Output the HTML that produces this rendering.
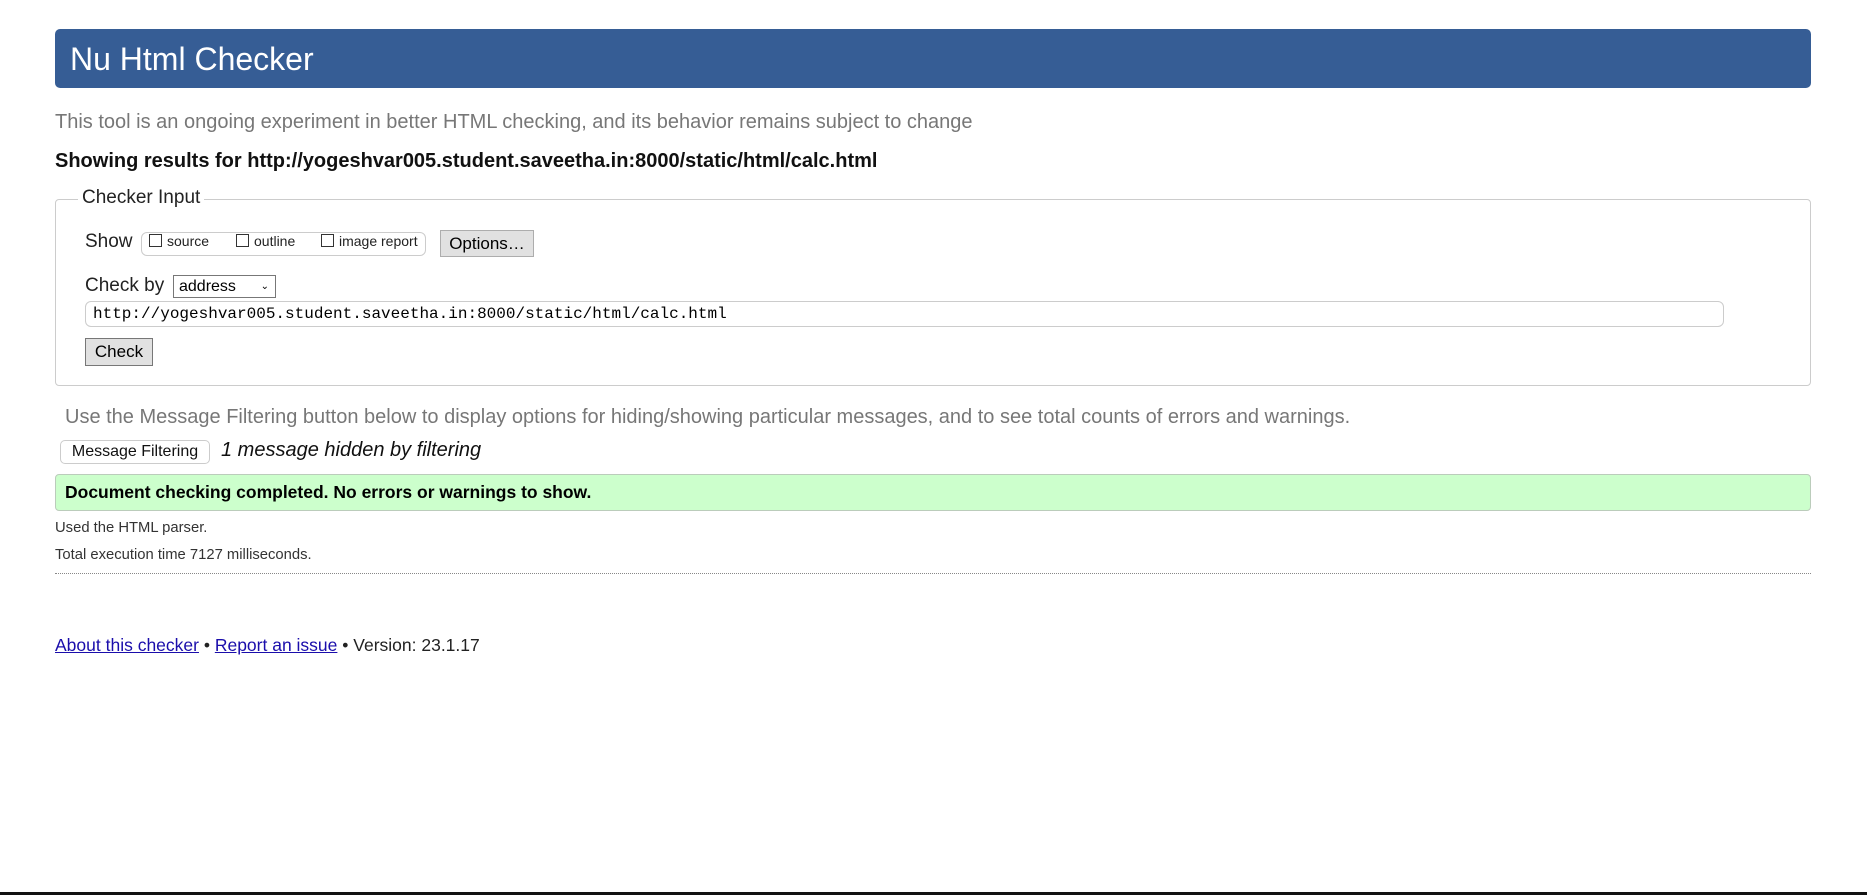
<!DOCTYPE html>
<html><head><meta charset="utf-8"><style>
body{margin:0;width:1867px;height:895px;background:#fff;font-family:"Liberation Sans",Arial,sans-serif;position:relative;overflow:hidden}
.a{position:absolute;white-space:nowrap}
.btn{position:absolute;background:#e1e1e1;border:1px solid #adadad;font-size:17px;color:#000;box-sizing:border-box;display:flex;align-items:center;justify-content:center}
.cb{display:inline-block;width:13px;height:13px;border:1px solid #333;box-sizing:border-box;vertical-align:-1px;margin-right:5px}
a{color:#1a0dab;text-decoration:underline}
</style></head><body>
<div class="a" style="left:55px;top:29px;width:1756px;height:59px;background:#365d95;border-radius:5px"></div>
<div class="a" style="left:70px;top:40px;font-size:32px;color:#fff;line-height:38px">Nu Html Checker</div>
<div class="a" style="left:55px;top:111px;font-size:20px;color:#777">This tool is an ongoing experiment in better HTML checking, and its behavior remains subject to change</div>
<div class="a" style="left:55px;top:150px;font-size:20px;font-weight:bold;color:#111">Showing results for http://yogeshvar005.student.saveetha.in:8000/static/html/calc.html</div>
<div class="a" style="left:55px;top:199px;width:1756px;height:187px;border:1px solid #ccc;border-radius:4px;box-sizing:border-box"></div>
<div class="a" style="left:78px;top:187px;font-size:19px;color:#222;background:#fff;padding:0 4px">Checker Input</div>
<div class="a" style="left:85px;top:231px;font-size:19px;color:#222">Show</div>
<div class="a" style="left:141px;top:232px;width:285px;height:24px;border:1px solid #ccc;border-radius:6px;box-sizing:border-box"></div>
<div class="a" style="left:149px;top:233px;font-size:14px;color:#222"><span class="cb"></span>source</div>
<div class="a" style="left:236px;top:233px;font-size:14px;color:#222"><span class="cb"></span>outline</div>
<div class="a" style="left:321px;top:233px;font-size:14px;color:#222"><span class="cb"></span>image report</div>
<div class="btn" style="left:440px;top:230px;width:94px;height:27px">Options…</div>
<div class="a" style="left:85px;top:275px;font-size:19px;color:#222">Check by</div>
<div class="a" style="left:173px;top:275px;width:103px;height:23px;border:1px solid #777;box-sizing:border-box;font-size:16px;padding-left:5px;line-height:21px">address<span style="position:absolute;right:6px;font-size:10px">&#8964;</span></div>
<div class="a" style="left:85px;top:301px;width:1639px;height:26px;border:1px solid #ccc;border-radius:6px;box-sizing:border-box;font-family:'Liberation Mono',monospace;font-size:16px;line-height:24px;padding-left:7px">http://yogeshvar005.student.saveetha.in:8000/static/html/calc.html</div>
<div class="btn" style="left:85px;top:338px;width:68px;height:28px;border-color:#777">Check</div>
<div class="a" style="left:65px;top:406px;font-size:20px;color:#777">Use the Message Filtering button below to display options for hiding/showing particular messages, and to see total counts of errors and warnings.</div>
<div class="a" style="left:60px;top:440px;width:150px;height:24px;border:1px solid #ccc;border-radius:5px;box-sizing:border-box;font-size:16px;text-align:center;line-height:22px;color:#111">Message Filtering</div>
<div class="a" style="left:221px;top:439px;font-size:20px;font-style:italic;color:#111">1 message hidden by filtering</div>
<div class="a" style="left:55px;top:474px;width:1756px;height:37px;background:#ccffcc;border:1px solid #bbccbb;border-radius:4px;box-sizing:border-box"></div>
<div class="a" style="left:65px;top:482px;font-size:17.5px;font-weight:bold;color:#000">Document checking completed. No errors or warnings to show.</div>
<div class="a" style="left:55px;top:520px;font-size:14.8px;color:#333">Used the HTML parser.</div>
<div class="a" style="left:55px;top:547px;font-size:14.8px;color:#333">Total execution time 7127 milliseconds.</div>
<div class="a" style="left:55px;top:573px;width:1756px;border-top:1px dotted #888"></div>
<div class="a" style="left:55px;top:635px;font-size:17.5px;color:#222"><a>About this checker</a> • <a>Report an issue</a> • Version: 23.1.17</div>
<div class="a" style="left:0;top:892px;width:1867px;height:3px;background:#111"></div>
</body></html>
